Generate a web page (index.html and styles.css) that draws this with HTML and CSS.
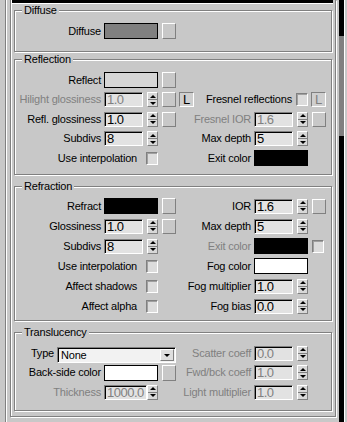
FILE: index.html
```html
<!DOCTYPE html>
<html lang="en">
<head>
    <meta charset="UTF-8">
    <meta name="viewport" content="width=device-width, initial-scale=1.0">
    <title>Material parameters</title>
    <link rel="stylesheet" href="styles.css">
</head>
<body>
    <div class="panel">
        <div class="frame">
            <div class="rollout">
                <div class="rollout-cap"></div>

                <!-- Diffuse -->
                <div class="group group-diffuse">
                    <span class="group-title">Diffuse</span>
                    <div class="rows">
                        <div class="cell">
                            <span class="label">Diffuse</span>
                            <span class="swatch swatch-gray"></span>
                            <span class="map-btn"></span>
                        </div>
                        <div class="cell"></div>
                    </div>
                </div>

                <!-- Reflection -->
                <div class="group group-reflection">
                    <span class="group-title">Reflection</span>
                    <div class="rows">
                        <div class="cell">
                            <span class="label">Reflect</span>
                            <span class="swatch swatch-light"></span>
                            <span class="map-btn"></span>
                        </div>
                        <div class="cell cell-right"></div>

                        <div class="cell">
                            <span class="label disabled">Hilight glossiness</span>
                            <span class="field disabled">1.0</span>
                            <span class="spinner"><span class="spin-up"></span><span class="spin-down"></span></span>
                            <span class="map-btn map-short"></span>
                            <span class="lock-btn">L</span>
                        </div>
                        <div class="cell cell-right cell-check cell-fresnel">
                            <span class="label">Fresnel reflections</span>
                            <span class="check"></span>
                            <span class="lock-btn disabled">L</span>
                        </div>

                        <div class="cell">
                            <span class="label">Refl. glossiness</span>
                            <span class="field">1.0</span>
                            <span class="spinner"><span class="spin-up"></span><span class="spin-down"></span></span>
                            <span class="map-btn map-short"></span>
                        </div>
                        <div class="cell cell-right">
                            <span class="label disabled">Fresnel IOR</span>
                            <span class="field disabled">1.6</span>
                            <span class="spinner"><span class="spin-up"></span><span class="spin-down"></span></span>
                            <span class="map-btn map-short"></span>
                        </div>

                        <div class="cell">
                            <span class="label">Subdivs</span>
                            <span class="field">8</span>
                            <span class="spinner"><span class="spin-up"></span><span class="spin-down"></span></span>
                        </div>
                        <div class="cell cell-right">
                            <span class="label">Max depth</span>
                            <span class="field">5</span>
                            <span class="spinner"><span class="spin-up"></span><span class="spin-down"></span></span>
                        </div>

                        <div class="cell cell-check">
                            <span class="label">Use interpolation</span>
                            <span class="check"></span>
                        </div>
                        <div class="cell cell-right">
                            <span class="label">Exit color</span>
                            <span class="swatch swatch-black"></span>
                        </div>
                    </div>
                </div>

                <!-- Refraction -->
                <div class="group group-refraction">
                    <span class="group-title">Refraction</span>
                    <div class="rows">
                        <div class="cell">
                            <span class="label">Refract</span>
                            <span class="swatch swatch-black"></span>
                            <span class="map-btn"></span>
                        </div>
                        <div class="cell cell-right">
                            <span class="label">IOR</span>
                            <span class="field">1.6</span>
                            <span class="spinner"><span class="spin-up"></span><span class="spin-down"></span></span>
                            <span class="map-btn map-short"></span>
                        </div>

                        <div class="cell">
                            <span class="label">Glossiness</span>
                            <span class="field">1.0</span>
                            <span class="spinner"><span class="spin-up"></span><span class="spin-down"></span></span>
                            <span class="map-btn map-short"></span>
                        </div>
                        <div class="cell cell-right">
                            <span class="label">Max depth</span>
                            <span class="field">5</span>
                            <span class="spinner"><span class="spin-up"></span><span class="spin-down"></span></span>
                        </div>

                        <div class="cell">
                            <span class="label">Subdivs</span>
                            <span class="field">8</span>
                            <span class="spinner"><span class="spin-up"></span><span class="spin-down"></span></span>
                        </div>
                        <div class="cell cell-right">
                            <span class="label disabled">Exit color</span>
                            <span class="swatch swatch-black"></span>
                            <span class="check check-after"></span>
                        </div>

                        <div class="cell cell-check">
                            <span class="label">Use interpolation</span>
                            <span class="check"></span>
                        </div>
                        <div class="cell cell-right">
                            <span class="label">Fog color</span>
                            <span class="swatch swatch-white"></span>
                        </div>

                        <div class="cell cell-check">
                            <span class="label">Affect shadows</span>
                            <span class="check"></span>
                        </div>
                        <div class="cell cell-right">
                            <span class="label">Fog multiplier</span>
                            <span class="field">1.0</span>
                            <span class="spinner"><span class="spin-up"></span><span class="spin-down"></span></span>
                        </div>

                        <div class="cell cell-check">
                            <span class="label">Affect alpha</span>
                            <span class="check"></span>
                        </div>
                        <div class="cell cell-right">
                            <span class="label">Fog bias</span>
                            <span class="field">0.0</span>
                            <span class="spinner"><span class="spin-up"></span><span class="spin-down"></span></span>
                        </div>
                    </div>
                </div>

                <!-- Translucency -->
                <div class="group group-translucency">
                    <span class="group-title">Translucency</span>
                    <div class="rows">
                        <div class="cell">
                            <span class="label label-type">Type</span>
                            <span class="select">
                                <span class="select-text">None</span>
                                <span class="select-arrow"></span>
                            </span>
                        </div>
                        <div class="cell cell-right">
                            <span class="label disabled">Scatter coeff</span>
                            <span class="field disabled">0.0</span>
                            <span class="spinner"><span class="spin-up"></span><span class="spin-down"></span></span>
                        </div>

                        <div class="cell">
                            <span class="label">Back-side color</span>
                            <span class="swatch swatch-white"></span>
                            <span class="map-btn"></span>
                        </div>
                        <div class="cell cell-right">
                            <span class="label disabled">Fwd/bck coeff</span>
                            <span class="field disabled">1.0</span>
                            <span class="spinner"><span class="spin-up"></span><span class="spin-down"></span></span>
                        </div>

                        <div class="cell">
                            <span class="label disabled">Thickness</span>
                            <span class="field field-wide disabled">1000.0</span>
                            <span class="spinner spinner-tight"><span class="spin-up"></span><span class="spin-down"></span></span>
                        </div>
                        <div class="cell cell-right">
                            <span class="label disabled">Light multiplier</span>
                            <span class="field disabled">1.0</span>
                            <span class="spinner"><span class="spin-up"></span><span class="spin-down"></span></span>
                        </div>
                    </div>
                </div>
            </div>
        </div>
        <div class="scrollbar">
            <div class="scroll-thumb"></div>
        </div>
    </div>
</body>
</html>
```

FILE: styles.css
```css
* {
    margin: 0;
    padding: 0;
    box-sizing: border-box;
}

body {
    background: #c8c8c8;
    font-family: "Liberation Sans", Arial, sans-serif;
    font-size: 11px;
    letter-spacing: -0.2px;
    color: #000;
    overflow: hidden;
}

.panel {
    display: flex;
    height: 422px;
    padding: 0 2px 0 5px;
}

.frame {
    flex: 1;
    border-left: 1px solid #808080;
    box-shadow: inset 1px 0 0 #fff;
    padding: 0 3px 0 4px;
}

.scrollbar {
    width: 6px;
    background: #000;
    border-right: 1px solid #fff;
}

.scroll-thumb {
    margin-top: 36px;
    height: 100px;
    background: #808080;
}

/* rollout + group boxes */
.rollout {
    border: 1px solid #808080;
    border-top: none;
    box-shadow: 1px 1px 0 #fff, inset 1px 0 0 #fff;
    padding: 0 3px 5px 3px;
}

.rollout-cap {
    height: 4px;
    border-top: 3px solid #000;
    border-bottom: 1px solid #fff;
    margin: 0 -1px 0 -2px;
}

.group {
    position: relative;
    border: 1px solid #808080;
    box-shadow: 1px 1px 0 #fff, inset 1px 1px 0 #fff;
}

.group-title {
    position: absolute;
    top: -7px;
    left: 7px;
    padding: 0 2px;
    line-height: 13px;
    background: #c8c8c8;
}

.group-diffuse {
    margin-top: 6px;
    padding: 12px 0 12px;
}

.group-reflection {
    margin-top: 7px;
    padding: 12px 0 8px;
}

.group-refraction {
    margin-top: 11px;
    padding: 11px 0 6px;
}

.group-translucency {
    margin-top: 11px;
    padding: 12px 0 10px;
}

.rows {
    display: grid;
    grid-template-columns: 165px 147px;
    grid-auto-rows: 16px;
}

.group-reflection .rows,
.group-translucency .rows {
    row-gap: 3.5px;
}

.group-refraction .rows {
    row-gap: 4px;
}

/* cells */
.cell {
    display: flex;
    align-items: center;
}

.cell > * {
    flex-shrink: 0;
}

.label {
    width: 86px;
    margin-right: 3px;
    text-align: right;
    white-space: nowrap;
    line-height: 13px;
}

.cell-right .label {
    width: 71px;
}

.label-type {
    width: 39px;
}

.disabled {
    color: #808080;
}

.cell-check {
    justify-content: flex-end;
    padding-right: 22px;
}

.cell-check .label {
    width: auto;
    margin-right: 9px;
}

.cell-fresnel {
    padding-right: 1px;
}

.cell-fresnel .label {
    margin-right: 4px;
}

/* controls */
.swatch {
    width: 54px;
    height: 16px;
    border: 1px solid #000;
}

.swatch-gray { background: #808080; }
.swatch-light { background: #d6d6d6; }
.swatch-black { background: #000; }
.swatch-white { background: #fff; }

.map-btn {
    width: 14px;
    height: 16px;
    margin-left: 4px;
    border: 1px solid;
    border-color: #fff #808080 #808080 #fff;
    background: #c8c8c8;
}

.map-short {
    height: 15px;
}

.lock-btn {
    width: 15px;
    height: 15px;
    margin-left: 3px;
    border: 1px solid;
    border-color: #808080 #fff #fff #808080;
    background: #cfcfcf;
    font-size: 13px;
    line-height: 13px;
    text-align: center;
    letter-spacing: 0;
}

.field {
    width: 39px;
    height: 15px;
    border: 1px solid;
    border-color: #808080 #fff #fff #808080;
    box-shadow: inset 1px 1px 0 #000;
    background: #e2e2e2;
    padding-left: 2px;
    font-size: 13px;
    line-height: 13px;
    letter-spacing: -0.5px;
    overflow: hidden;
    white-space: nowrap;
}

.field-wide {
    width: 43px;
}

.spinner {
    width: 11px;
    height: 15px;
    margin-left: 4px;
    display: flex;
    flex-direction: column;
    border: 1px solid;
    border-color: #fff #808080 #808080 #fff;
    background: #d8d8d8;
}

.spinner-tight {
    margin-left: 0;
}

.spin-up,
.spin-down {
    flex: 1;
    display: flex;
    align-items: center;
    justify-content: center;
}

.spin-up {
    border-bottom: 1px solid #808080;
}

.spin-up::after {
    content: "";
    border: 3px solid transparent;
    border-top: 0;
    border-bottom-color: #000;
}

.spin-down::after {
    content: "";
    border: 3px solid transparent;
    border-bottom: 0;
    border-top-color: #000;
}

.check {
    width: 12px;
    height: 13px;
    border: 1px solid;
    border-color: #808080 #fff #fff #808080;
    box-shadow: inset 1px 1px 0 #a0a0a0;
    background: #dcdcdc;
}

.check-after {
    margin-left: 4px;
}

.select {
    width: 119px;
    height: 16px;
    align-self: flex-start;
    margin-top: 2px;
    display: flex;
    border: 1px solid;
    border-color: #808080 #fff #fff #808080;
    box-shadow: inset 1px 1px 0 #000;
    background: #f2f2f2;
}

.select-text {
    flex: 1;
    padding: 1px 0 0 3px;
    font-size: 11px;
    line-height: 13px;
}

.select-arrow {
    width: 14px;
    margin: 1px 1px 1px 0;
    display: flex;
    align-items: center;
    justify-content: center;
    border: 1px solid;
    border-color: #fff #808080 #808080 #fff;
    background: #dedede;
}

.select-arrow::after {
    content: "";
    border: 3px solid transparent;
    border-bottom: 0;
    border-top-color: #000;
}
```
